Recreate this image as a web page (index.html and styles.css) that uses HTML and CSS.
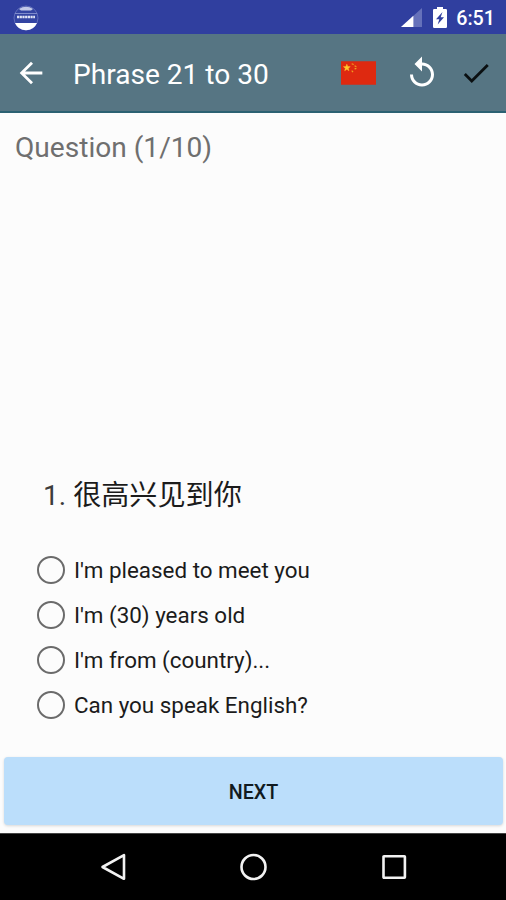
FILE: index.html
```html
<!DOCTYPE html>
<html lang="en">
<head>
  <meta charset="UTF-8" />
  <meta name="viewport" content="width=device-width, initial-scale=1" />
  <title>Phrase 21 to 30</title>
  <link rel="stylesheet" href="styles.css">
</head>
<body>
  <!-- Status bar -->
  <div class="status-bar">
    <svg class="app-badge" viewBox="0 0 26 26">
      <circle cx="13" cy="13" r="12" fill="#3344a2" stroke="#7480c4" stroke-width="0.7" />
      <path d="M6 4A12 12 0 0 1 20 4L18 5.500H8z" fill="#c3c9e8" />
      <path d="M2 8.500h22" stroke="#7f8bcb" stroke-width="1" />
      <path d="M4 12h18" stroke="#dfe3f5" stroke-width="2.600" stroke-dasharray="2.200 0.500" />
      <path d="M2 18h22a12 12 0 0 1-22 0z" fill="#fff" />
    </svg>
    <svg class="signal" viewBox="0 0 21 19">
      <path d="M0 19L21 0v19z" fill="#6571ba" />
      <path d="M0 19L12.4 7.8V19z" fill="#fff" />
    </svg>
    <svg class="battery" viewBox="0 0 14 21">
      <path d="M4 0h6v2h2.800q1.200 0 1.200 1.200v16.600q0 1.200-1.200 1.200H1.200Q0 21 0 19.800V3.200Q0 2 1.200 2H4z" fill="#fff" />
      <path d="M9.500 5L3 12.200h3.300L4.700 17.500L11 10.300H7.700z" fill="#303f9f" />
    </svg>
    <span class="clock">6:51</span>
  </div>

  <!-- Toolbar -->
  <header class="toolbar">
    <button class="icon-btn back" aria-label="Back">
      <svg viewBox="0 0 24 24"><path d="M20 11H7.830l5.590-5.590L12 4l-8 8 8 8 1.410-1.410L7.830 13H20v-2z" /></svg>
    </button>
    <h1>Phrase 21 to 30</h1>
    <svg class="flag" viewBox="0 0 36 24">
      <path d="M0 0h36v24H0z" fill="#de2910" />
      <path d="M6 3l.9 2.400 2.600.1-2 1.600.7 2.500L6 8.200 3.800 9.600l.7-2.500-2-1.600 2.600-.1z" fill="#ffc72c" stroke="#ffc72c" stroke-width=".5" />
      <path d="M11 2.500l2 .8M14 4.600l1.800 1M14 7.800l1.800-.6M11 9.600l1.400 1.600" stroke="#f0a020" stroke-width="1.200" />
    </svg>
    <button class="icon-btn replay" aria-label="Restart">
      <svg viewBox="0 0 24 24"><path d="M12 5V1L7 6l5 5V7c3.310 0 6 2.690 6 6s-2.690 6-6 6-6-2.690-6-6H4c0 4.420 3.580 8 8 8s8-3.580 8-8-3.580-8-8-8z" /></svg>
    </button>
    <button class="icon-btn done" aria-label="Done">
      <svg viewBox="0 0 24 24"><path d="M9 16.200L4.800 12l-1.400 1.400L9 19 21 7l-1.400-1.400L9 16.200z" /></svg>
    </button>
  </header>

  <!-- Quiz -->
  <main>
    <h2>Question (1/10)</h2>
    <form class="quiz">
      <p class="phrase">1. <span lang="zh-CN">很高兴见到你</span></p>
      <label><input type="radio" name="answer" />I'm pleased to meet you</label>
      <label><input type="radio" name="answer" />I'm (30) years old</label>
      <label><input type="radio" name="answer" />I'm from (country)...</label>
      <label><input type="radio" name="answer" />Can you speak English?</label>
    </form>
    <button class="next">NEXT</button>
  </main>

  <!-- System navigation -->
  <nav class="nav-bar">
    <svg viewBox="0 0 28 28"><path d="M25 2.200v23.600L3.500 14z" /></svg>
    <svg viewBox="0 0 28 28"><circle cx="14.500" cy="14" r="12" /></svg>
    <svg viewBox="0 0 28 28"><rect x="3.500" y="3.300" width="21.400" height="21.400" rx="0.500" /></svg>
  </nav>
</body>
</html>
```

FILE: styles.css
```css
*, *::before, *::after {
  margin: 0;
  padding: 0;
  box-sizing: border-box;
}
body {
  font-family: Roboto, "Noto Sans CJK SC", sans-serif;
  background: #fcfcfc;
  color: #1b1b1b;
  height: 100vh;
  display: flex;
  flex-direction: column;
  overflow: hidden;
}
button {
  font-family: inherit;
  border: none;
  background: transparent;
  cursor: pointer;
}
svg {
  display: block;
  flex: none;
}
/* Status bar */
.status-bar {
  height: 34px;
  flex: none;
  display: flex;
  align-items: center;
  padding: 1px 11px 0 13px;
  background: #303f9f;
  color: #fff;
}
.app-badge {
  width: 26px;
  height: 26px;
  margin-right: auto;
}
.signal {
  width: 21px;
  height: 19px;
  margin-right: 11px;
}
.battery {
  width: 14px;
  height: 21px;
  margin-right: 9px;
}
.clock {
  font-size: 19.7px;
  font-weight: 500;
  line-height: 30px;
  padding-top: 2px;
}
/* Toolbar */
.toolbar {
  height: 79px;
  flex: none;
  display: flex;
  align-items: center;
  padding: 1px 13px 0 14px;
  background: #567583;
  border-bottom: 2px solid #2b6172;
}
.icon-btn {
  width: 34px;
  height: 34px;
  flex: none;
}
.icon-btn svg {
  width: 100%;
  height: 100%;
  fill: #fff;
}
.toolbar h1 {
  font-size: 28.1px;
  font-weight: 400;
  color: #fff;
  margin-left: 25px;
  margin-right: auto;
  padding-top: 2px;
  white-space: nowrap;
}
.flag {
  width: 35px;
  height: 24px;
  margin-right: 28px;
}
.replay {
  width: 36px;
  height: 36px;
  margin-right: 19px;
}
.done svg {
  fill: #0a0f11;
}
/* Quiz */
main {
  flex: 1;
  display: flex;
  flex-direction: column;
}
h2 {
  font-size: 28.1px;
  font-weight: 400;
  line-height: 33px;
  color: #6f6f6f;
  padding: 18px 15px 0;
}
.quiz {
  margin-top: auto;
  padding: 0 37px 30px;
}
.phrase {
  font-size: 28.1px;
  line-height: 40px;
  padding-left: 6px;
  margin-bottom: 31px;
  color: #3c3c3c;
}
.phrase span {
  color: #1b1b1b;
}
label {
  display: flex;
  align-items: center;
  height: 45px;
  font-size: 22.4px;
}
input[type="radio"] {
  appearance: none;
  width: 28px;
  height: 28px;
  border: 2.5px solid #6b6b6b;
  border-radius: 50%;
  margin-right: 9px;
}
.next {
  height: 68px;
  margin: 0 3px 8px 4px;
  padding-top: 2px;
  border-radius: 4px;
  background: #bbdefb;
  color: #111a20;
  font-size: 19.7px;
  font-weight: 500;
  box-shadow: 0 1px 3px rgba(0, 0, 0, 0.15);
}
/* System navigation */
.nav-bar {
  height: 67px;
  flex: none;
  display: flex;
  justify-content: center;
  align-items: center;
  gap: 112.5px;
  background: #000;
  border-top: 1px solid #444;
}
.nav-bar svg {
  width: 28px;
  height: 28px;
  fill: none;
  stroke: #f2f2f2;
  stroke-width: 2.6;
  stroke-linejoin: round;
}
```
